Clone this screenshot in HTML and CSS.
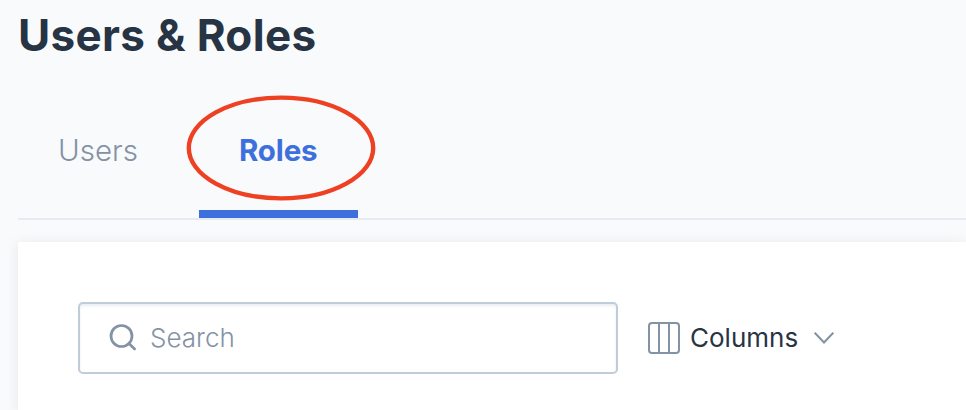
FILE: index.html
```html
<!DOCTYPE html>
<html lang="en">
  <head>
    <meta charset="UTF-8" />
    <meta name="viewport" content="width=device-width, initial-scale=1.0" />
    <title>Users &amp; Roles</title>
    <link rel="stylesheet" href="styles.css">
  </head>
  <body>
    <h1>Users &amp; Roles</h1>

    <nav class="tabs">
      <a class="tab">Users</a>
      <a class="tab active">
        Roles
        <svg class="circle" width="190" height="106" viewBox="0 0 190 106">
          <ellipse cx="95" cy="53" rx="92.2" ry="50.4" />
        </svg>
      </a>
    </nav>

    <div class="card">
      <!-- Toolbar -->
      <label class="search">
        <svg class="search-icon" width="28" height="28" viewBox="0 0 28 28">
          <circle cx="12.5" cy="12" r="10.5" />
          <path d="M20 19.5 L25.6 25" />
        </svg>
        <input type="text" placeholder="Search" />
      </label>
      <button class="columns">
        <svg class="columns-icon" width="32" height="32" viewBox="0 0 32 32">
          <rect x="1" y="1" width="30" height="30" rx="3" />
          <path d="M11 1 V31 M21 1 V31" />
        </svg>
        <span>Columns</span>
        <svg class="chevron" width="20" height="12" viewBox="0 0 20 12">
          <path d="M0.7 0.7 L10 10.5 L19.3 0.7" />
        </svg>
      </button>
    </div>
  </body>
</html>
```

FILE: styles.css
```css
body {
  margin: 0;
  padding-left: 18px;
  font-family: Inter, sans-serif;
  background-color: #f9fafc;
  color: #273444;
}
h1 {
  margin: 0;
  padding-top: 7px;
  height: 83px;
  line-height: 56px;
  font-size: 44px;
  font-weight: 700;
  letter-spacing: 0.33px;
}
.tabs {
  display: flex;
  gap: 21px;
  height: 128px;
  border-bottom: 2px solid #e5ebf2;
}
.tab {
  position: relative;
  box-sizing: border-box;
  width: 160px;
  padding: 40px 0 0 40px;
  line-height: 40px;
  font-size: 29.5px;
  font-weight: 350;
  color: #8492a6;
}
.tab.active {
  width: 159px;
  border-bottom: 8px solid #3e70dd;
  font-weight: 700;
  letter-spacing: -0.15px;
  color: #3e70dd;
}
.circle {
  position: absolute;
  left: -13px;
  top: 5px;
}
.circle ellipse {
  fill: none;
  stroke: #ee4023;
  stroke-width: 4.4;
}
.card {
  display: flex;
  align-items: flex-start;
  gap: 30px;
  height: 168px;
  margin-top: 22px;
  padding: 60px 60px 0;
  box-sizing: border-box;
  background-color: #fff;
  box-shadow: 0 2px 12px rgba(39, 52, 68, 0.1);
}
.search {
  display: flex;
  align-items: center;
  box-sizing: border-box;
  width: 540px;
  height: 72px;
  padding: 0 29px;
  border: 2px solid #c0ccda;
  border-radius: 5px;
  box-shadow: inset 0 2px 3px #e9edf4;
}
.search input {
  flex: 1;
  padding: 0 0 1px 13px;
  border: none;
  outline: none;
  background: none;
  font-family: inherit;
  font-size: 26px;
  font-weight: 350;
  color: #273444;
}
.search input::placeholder {
  color: #8492a6;
}
.columns {
  display: flex;
  align-items: center;
  height: 72px;
  padding: 0;
  border: none;
  background: none;
  font-family: inherit;
  font-size: 26px;
  color: #273444;
}
.columns span {
  width: 108px;
  margin: 0 16px 0 10px;
  padding-bottom: 1px;
  text-align: left;
}
.search-icon,
.columns-icon,
.chevron {
  fill: none;
  stroke: #8492a6;
  stroke-width: 2;
}
.search-icon {
  stroke-width: 2.7;
  stroke-linecap: round;
}
```
